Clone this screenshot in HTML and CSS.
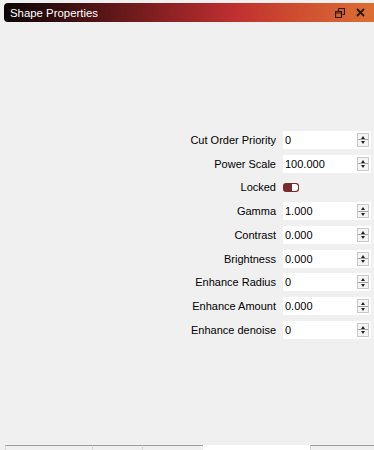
FILE: index.html
```html
<!DOCTYPE html>
<html lang="en">
<head>
  <meta charset="UTF-8">
  <title>Shape Properties</title>
  <link rel="stylesheet" href="styles.css">
</head>
<body>
  <div class="dock">
    <div class="titlebar">
      <span class="title">Shape Properties</span>
      <span class="tools">
        <svg class="float" width="10" height="10" viewBox="0 0 10 10"><path d="M3.5 0.5h6v6h-2M0.5 3.5h6v6h-6z M3.5 0.5v3 M0.5 5h6" fill="none" stroke="#2a1a12" stroke-width="1.2"/></svg>
        <svg class="close" width="9" height="9" viewBox="0 0 9 9"><path d="M1 1l7 7M8 1l-7 7" stroke="#2a1a12" stroke-width="1.8"/></svg>
      </span>
    </div>

    <div class="form">
      <div class="row"><label>Cut Order Priority</label><div class="spin"><span class="val">0</span><span class="btns"><i class="up"></i><i class="down"></i></span></div></div>
      <div class="row"><label>Power Scale</label><div class="spin"><span class="val">100.000</span><span class="btns"><i class="up"></i><i class="down"></i></span></div></div>
      <div class="row"><label>Locked</label><div class="toggle"><span class="knob"></span></div></div>
      <div class="row"><label>Gamma</label><div class="spin"><span class="val">1.000</span><span class="btns"><i class="up"></i><i class="down"></i></span></div></div>
      <div class="row"><label>Contrast</label><div class="spin"><span class="val">0.000</span><span class="btns"><i class="up"></i><i class="down"></i></span></div></div>
      <div class="row"><label>Brightness</label><div class="spin"><span class="val">0.000</span><span class="btns"><i class="up"></i><i class="down"></i></span></div></div>
      <div class="row"><label>Enhance Radius</label><div class="spin"><span class="val">0</span><span class="btns"><i class="up"></i><i class="down"></i></span></div></div>
      <div class="row"><label>Enhance Amount</label><div class="spin"><span class="val">0.000</span><span class="btns"><i class="up"></i><i class="down"></i></span></div></div>
      <div class="row"><label>Enhance denoise</label><div class="spin"><span class="val">0</span><span class="btns"><i class="up"></i><i class="down"></i></span></div></div>
    </div>

    <div class="tabs">
      <span class="tab t1"></span>
      <span class="tab t2"></span>
      <span class="tab t3"></span>
      <span class="tab active"></span>
      <span class="tab t5"></span>
    </div>
  </div>
</body>
</html>
```

FILE: styles.css
```css
body {
  margin: 0;
  background: #f0f0f0;
  font-family: "Liberation Sans", Arial, sans-serif;
  font-size: 11px;
  color: #000;
}
.dock {
  width: 374px;
  height: 450px;
  display: flex;
  flex-direction: column;
  overflow: hidden;
}
.titlebar {
  margin: 3px 0 0 4px;
  height: 19px;
  border-radius: 4px 0 0 4px;
  background: linear-gradient(to right, #0b0405 0%, #4a1214 22%, #8e2224 45%, #bf2f30 62%, #cf4f30 80%, #dc6e34 100%);
  display: flex;
  align-items: center;
  justify-content: space-between;
  padding: 0 9px 0 6px;
}
.title {
  color: #fff;
  font-size: 11.4px;
}
.tools {
  display: flex;
  align-items: center;
  gap: 11px;
}
.form {
  margin-top: 106px;
  display: flex;
  flex-direction: column;
}
.row {
  display: flex;
  align-items: center;
  height: 23.75px;
}
.row label {
  width: 283px;
  text-align: right;
  padding-right: 7px;
  box-sizing: border-box;
  color: #000;
}
.spin {
  width: 88px;
  height: 18px;
  background: #fff;
  display: flex;
  align-items: center;
  justify-content: space-between;
}
.val {
  padding-left: 2px;
}
.btns {
  width: 12px;
  height: 14px;
  margin-right: 2px;
  border: 1px solid #c8c8c8;
  box-sizing: border-box;
  display: flex;
  flex-direction: column;
  background: #f4f4f4;
}
.btns i {
  flex: 1;
  position: relative;
}
.btns i.up {
  border-bottom: 1px solid #a0a0a0;
}
.btns i::after {
  content: "";
  position: absolute;
  left: 3px;
  top: 2px;
  border-left: 2.5px solid transparent;
  border-right: 2.5px solid transparent;
}
.btns i.up::after {
  border-bottom: 3px solid #222;
}
.btns i.down::after {
  top: 1px;
  border-top: 3px solid #222;
}
.toggle {
  width: 16px;
  height: 9px;
  border-radius: 3px;
  background: #7b2a2c;
  position: relative;
}
.knob {
  position: absolute;
  right: 1px;
  top: 1px;
  width: 6px;
  height: 7px;
  border-radius: 0 3px 3px 0;
  background: #fff;
}
.tabs {
  margin-top: auto;
  display: flex;
  height: 5px;
}
.tab {
  height: 5px;
  border-top: 1px solid #9c9c9c;
  border-left: 1px solid #d8d8d8;
  box-sizing: border-box;
  background: #f0f0f0;
}
.t1 { margin-left: 5px; width: 87px; }
.t2 { width: 50px; }
.t3 { width: 61px; }
.tab.active { width: 107px; background: #fff; border-top-color: #fff; border-left: none; }
.t5 { flex: 1; }
```
